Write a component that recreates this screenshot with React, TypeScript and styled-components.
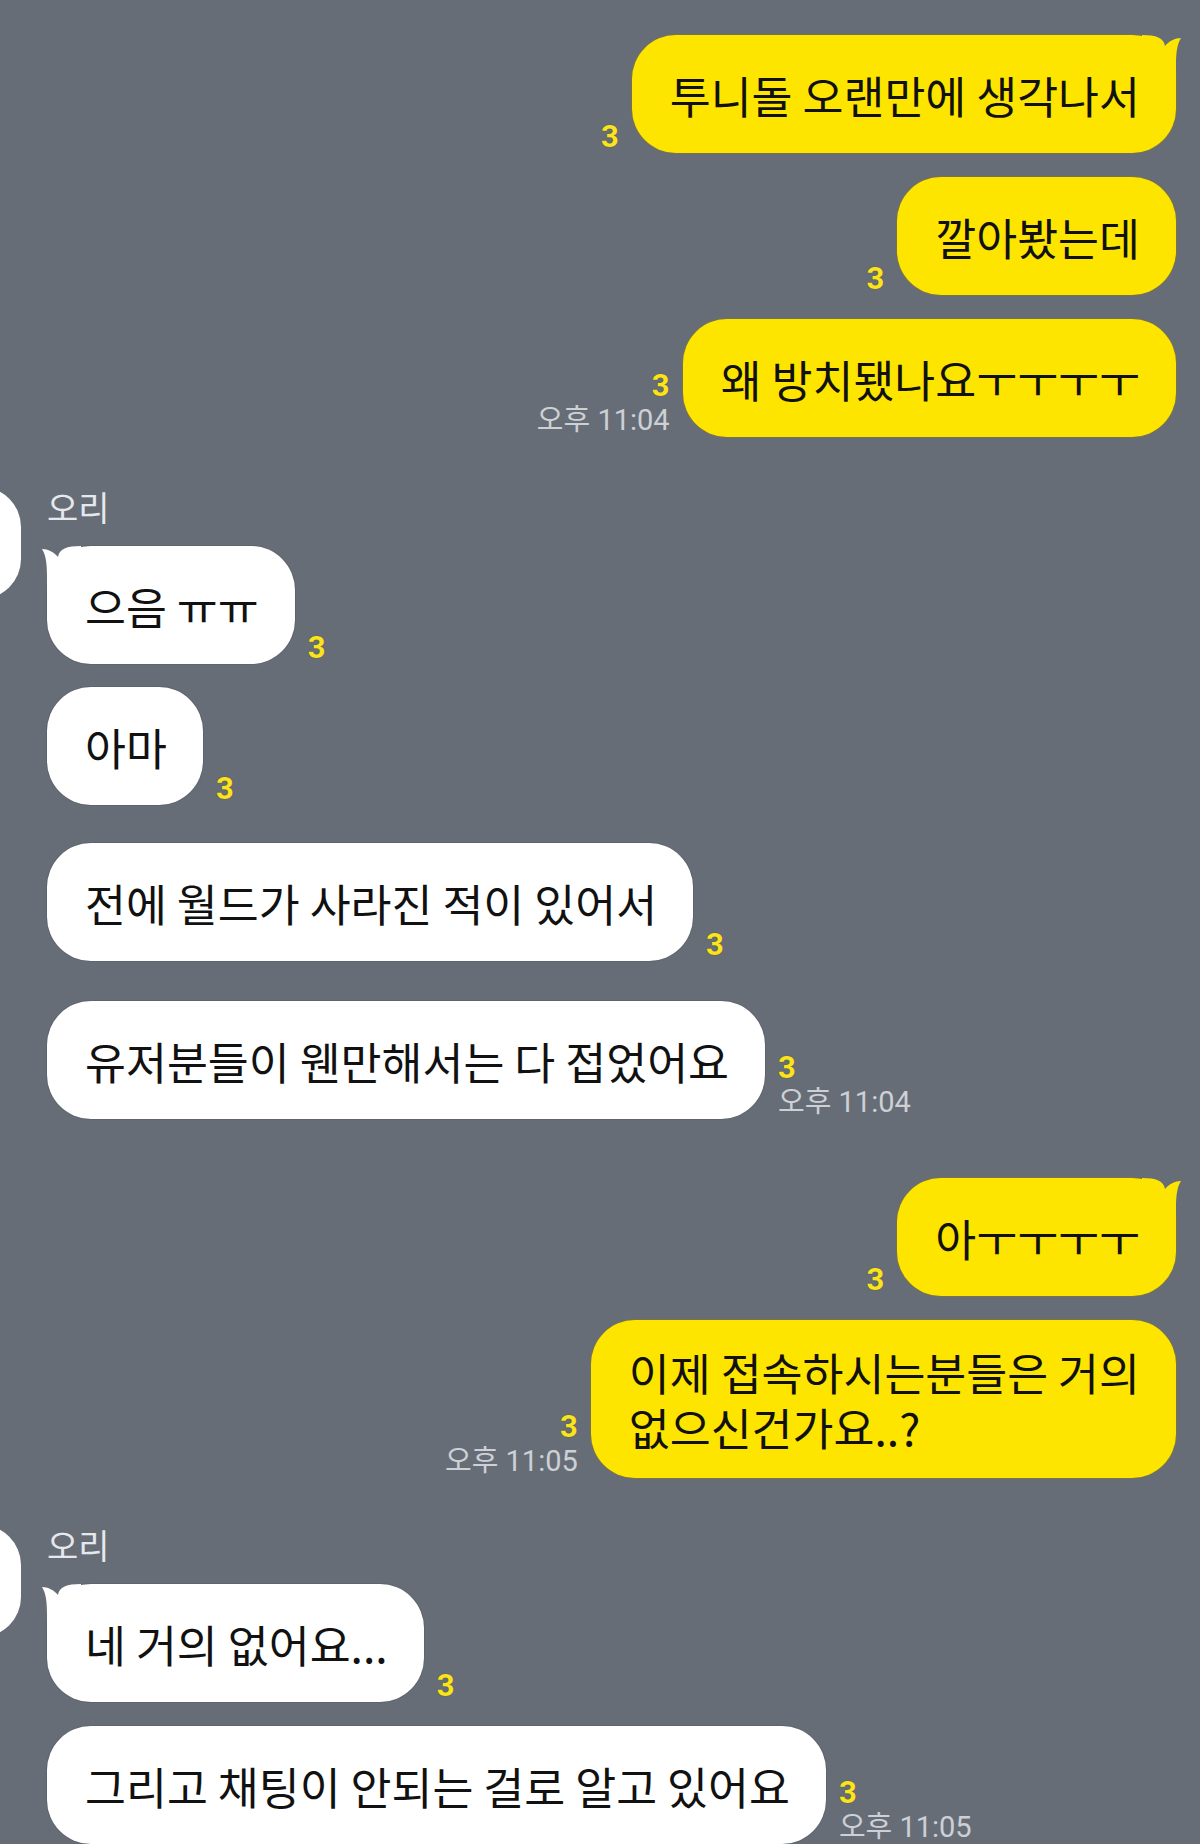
import styled, { createGlobalStyle } from 'styled-components'

const GlobalStyle = createGlobalStyle`
  html, body {
    margin: 0;
    padding: 0;
  }
  body {
    background: #676d77;
    overflow: hidden;
    font-family: 'Noto Sans CJK KR', 'Noto Sans', sans-serif;
  }
`

const Screen = styled.div`
  width: 1200px;
  height: 1844px;
  overflow: hidden;
  box-sizing: border-box;
  padding: 35px 24px 0 0;
  display: flex;
  flex-direction: column;
  background: #676d77;
`

const MyGroup = styled.section<{ $top: number }>`
  display: flex;
  flex-direction: column;
  align-items: flex-end;
  margin-top: ${({ $top }) => $top}px;
`

const TheirGroup = styled.section<{ $top: number }>`
  display: flex;
  align-items: flex-start;
  margin-top: ${({ $top }) => $top}px;
`

const Avatar = styled.div`
  flex: none;
  width: 110px;
  height: 112px;
  margin-left: -89px;
  margin-right: 26px;
  border-radius: 40px;
  background: #ffffff;
`

const TheirColumn = styled.div`
  display: flex;
  flex-direction: column;
  align-items: flex-start;
`

const Name = styled.div`
  font-size: 34px;
  line-height: 40px;
  color: #e6e8eb;
  margin-bottom: 19px;
`

const Row = styled.div<{ $mine: boolean; $gap: number }>`
  display: flex;
  flex-direction: ${({ $mine }) => ($mine ? 'row-reverse' : 'row')};
  align-items: flex-end;
  gap: 13px;
  margin-top: ${({ $gap }) => $gap}px;
`

const Bubble = styled.div<{ $mine: boolean }>`
  position: relative;
  box-sizing: border-box;
  min-height: 118px;
  display: flex;
  align-items: center;
  padding: 24px 36px 24px 38px;
  border-radius: 44px;
  background: ${({ $mine }) => ($mine ? '#fee500' : '#ffffff')};
  box-shadow: 0 0 0 1px ${({ $mine }) => ($mine ? 'rgba(150, 125, 0, 0.35)' : 'rgba(0, 0, 0, 0.08)')};
  color: #111111;
  font-size: 44.5px;
  line-height: 55px;
  white-space: pre-line;
`

const Tail = styled.svg<{ $mine: boolean }>`
  position: absolute;
  top: 0;
  width: 40px;
  height: 44px;
  ${({ $mine }) => ($mine ? 'right: -6px;' : 'left: -6px; transform: scaleX(-1);')}
`

const Meta = styled.div<{ $mine: boolean }>`
  flex: none;
  display: flex;
  flex-direction: column;
  align-items: ${({ $mine }) => ($mine ? 'flex-end' : 'flex-start')};
  padding-bottom: 1px;
`

const Unread = styled.span`
  font-family: Roboto, 'Liberation Sans', sans-serif;
  font-weight: 700;
  font-size: 31px;
  line-height: 30px;
  color: #fbe41b;
  text-shadow: 0 0 1px rgba(60, 50, 0, 0.7);
`

const Time = styled.span`
  font-family: Roboto, 'Noto Sans CJK KR', sans-serif;
  font-size: 29px;
  line-height: 32px;
  margin-top: 3px;
  color: #cdd0d5;
  white-space: nowrap;
`

type Message = { text: string; time?: string; gap?: number }
type Conversation = { mine: boolean; top: number; messages: Message[] }

const conversation: Conversation[] = [
  {
    mine: true,
    top: 0,
    messages: [
      { text: '투니돌 오랜만에 생각나서' },
      { text: '깔아봤는데' },
      { text: '왜 방치됐나요ㅜㅜㅜㅜ', time: '오후 11:04' },
    ],
  },
  {
    mine: false,
    top: 50,
    messages: [
      { text: '으음 ㅠㅠ' },
      { text: '아마', gap: 23 },
      { text: '전에 월드가 사라진 적이 있어서', gap: 38 },
      { text: '유저분들이 웬만해서는 다 접었어요', time: '오후 11:04', gap: 40 },
    ],
  },
  {
    mine: true,
    top: 59,
    messages: [
      { text: '아ㅜㅜㅜㅜ' },
      { text: '이제 접속하시는분들은 거의\n없으신건가요..?', time: '오후 11:05' },
    ],
  },
  {
    mine: false,
    top: 47,
    messages: [
      { text: '네 거의 없어요...' },
      { text: '그리고 채팅이 안되는 걸로 알고 있어요', time: '오후 11:05' },
    ],
  },
]

const BubbleTail = ({ mine }: { mine: boolean }) => (
  <Tail $mine={mine} viewBox="0 0 40 44">
    <path
      d="M0 0 C14 0 22 3 23 11 C27 6 33 3 39 3 C36 8 34 14 34 30 L34 44 L0 44 Z"
      fill={mine ? '#fee500' : '#ffffff'}
    />
  </Tail>
)

const MessageRows = ({ mine, messages }: { mine: boolean; messages: Message[] }) => (
  <>
    {messages.map((message, index) => (
      <Row key={message.text} $mine={mine} $gap={index === 0 ? 0 : message.gap ?? 24}>
        <Bubble $mine={mine}>
          {index === 0 && <BubbleTail mine={mine} />}
          {message.text}
        </Bubble>
        <Meta $mine={mine}>
          <Unread>3</Unread>
          {message.time && <Time>{message.time}</Time>}
        </Meta>
      </Row>
    ))}
  </>
)

const App = () => {
  return (
    <>
      <GlobalStyle />
      <Screen>
        {conversation.map((group, index) =>
          group.mine ? (
            <MyGroup key={index} $top={group.top}>
              <MessageRows mine messages={group.messages} />
            </MyGroup>
          ) : (
            <TheirGroup key={index} $top={group.top}>
              <Avatar />
              <TheirColumn>
                <Name>오리</Name>
                <MessageRows mine={false} messages={group.messages} />
              </TheirColumn>
            </TheirGroup>
          ),
        )}
      </Screen>
    </>
  )
}

export default App
